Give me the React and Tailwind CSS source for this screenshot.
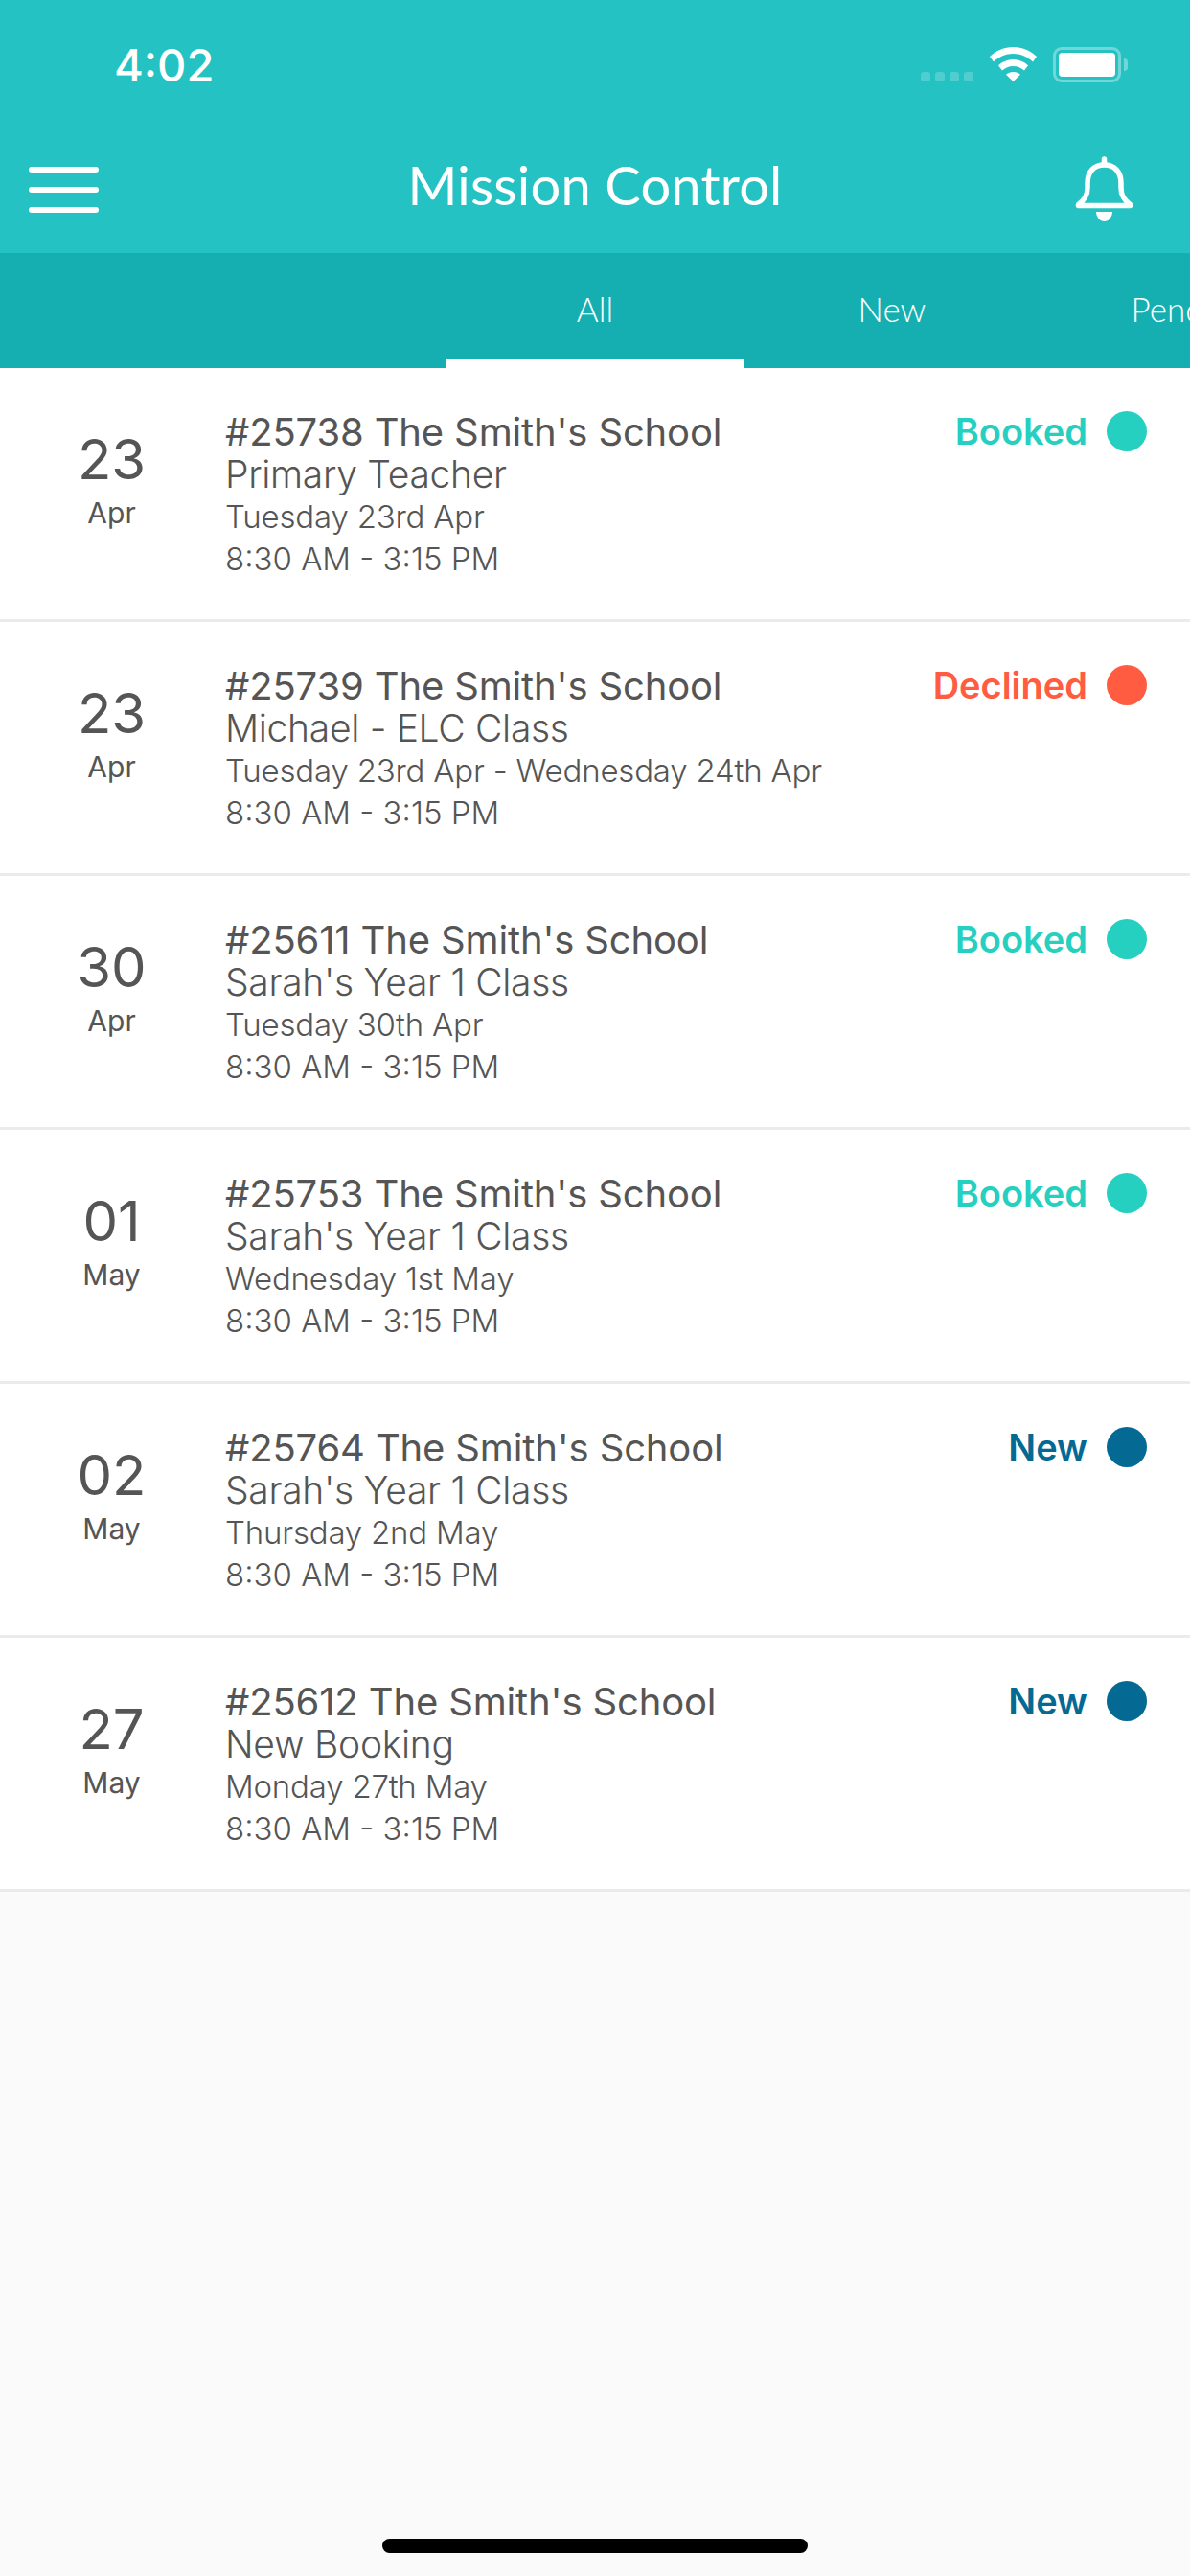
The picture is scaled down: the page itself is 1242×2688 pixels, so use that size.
import React from "react";

const rows = [
  { day: "23", month: "Apr", title: "#25738 The Smith's School", sub: "Primary Teacher", date: "Tuesday 23rd Apr", status: "Booked" },
  { day: "23", month: "Apr", title: "#25739 The Smith's School", sub: "Michael - ELC Class", date: "Tuesday 23rd Apr - Wednesday 24th Apr", status: "Declined" },
  { day: "30", month: "Apr", title: "#25611 The Smith's School", sub: "Sarah's Year 1 Class", date: "Tuesday 30th Apr", status: "Booked" },
  { day: "01", month: "May", title: "#25753 The Smith's School", sub: "Sarah's Year 1 Class", date: "Wednesday 1st May", status: "Booked" },
  { day: "02", month: "May", title: "#25764 The Smith's School", sub: "Sarah's Year 1 Class", date: "Thursday 2nd May", status: "New" },
  { day: "27", month: "May", title: "#25612 The Smith's School", sub: "New Booking", date: "Monday 27th May", status: "New" },
];

const statusText = {
  Booked: "text-[#26d0c0]",
  Declined: "text-[#ff5c42]",
  New: "text-[#046a94]",
};

const statusDot = {
  Booked: "bg-[#26d0c0]",
  Declined: "bg-[#ff5c42]",
  New: "bg-[#046a94]",
};

const BookingRow = ({ row }) => (
  <div className="flex h-[265px] border-b-[3px] border-[#ebebed] bg-white font-['Inter',sans-serif]">
    <div className="flex w-[235px] shrink-0 flex-col items-center pr-[2px] pt-[62px]">
      <span className="text-[58px] leading-[66px] text-[#555555]">{row.day}</span>
      <span className="mt-[3px] text-[30px] leading-[40px] text-[#555555]">{row.month}</span>
    </div>
    <div className="flex-1 pt-[44px] text-[#555555]">
      <div className="text-[40px] leading-[45px] tracking-[-0.15px]">{row.title}</div>
      <div className="mt-[-1px] text-[39px] font-light leading-[45px] tracking-[-0.3px]">{row.sub}</div>
      <div className="text-[33px] font-light leading-[44px] tracking-[-0.2px]">{row.date}</div>
      <div className="text-[33px] font-light leading-[44px]">8:30 AM - 3:15 PM</div>
    </div>
    <div className="flex h-fit items-center gap-[20px] pr-[45px] pt-[45px]">
      <span className={`text-[38px] font-semibold leading-[42px] ${statusText[row.status]}`}>{row.status}</span>
      <span className={`h-[42px] w-[42px] rounded-full ${statusDot[row.status]}`} />
    </div>
  </div>
);

export default function App() {
  return (
    <div className="flex h-[2688px] w-[1242px] flex-col overflow-hidden bg-[#fafafa]">
      {/* status bar and title */}
      <div className="h-[264px] bg-[#25c2c3] text-white">
        <div className="flex h-[130px] items-start pl-[119px] pr-[65px] pt-[40px]">
          <span className="font-['Inter',sans-serif] text-[47px] font-medium leading-[56px]">4:02</span>
          <div className="ml-auto flex items-start pt-[9px]">
            <div className="mt-[26px] flex gap-[5px]">
              <span className="h-[10px] w-[10px] rounded-[3px] bg-white/20" />
              <span className="h-[10px] w-[10px] rounded-[3px] bg-white/20" />
              <span className="h-[10px] w-[10px] rounded-[3px] bg-white/20" />
              <span className="h-[10px] w-[10px] rounded-[3px] bg-white/20" />
            </div>
            <svg className="ml-[17px]" width="49" height="36" viewBox="0 0 49 36" fill="white">
              <path d="M24.5 0C15 0 6.7 3.7 0 10l4 5.5C9.7 10.2 16.6 7 24.5 7s14.8 3.2 20.5 8.5l4-5.5C42.3 3.7 34 0 24.5 0z" />
              <path d="M24.5 13c-6 0-11.3 2.3-15.5 6.2l4 5.3c3-2.7 7-4.5 11.5-4.5s8.5 1.8 11.5 4.5l4-5.3C35.8 15.3 30.5 13 24.5 13z" />
              <path d="M24.5 26c-3 0-5.5 1-7.5 2.8L24.5 36 32 28.8C30 27 27.5 26 24.5 26z" />
            </svg>
            <div className="ml-[17px] flex items-center">
              <div className="h-[37px] w-[71px] rounded-[9px] border-[3px] border-white/35 p-[3px]">
                <div className="h-full w-full rounded-[4px] bg-white" />
              </div>
              <div className="ml-[3px] h-[13px] w-[4px] rounded-r-full bg-white/35" />
            </div>
          </div>
        </div>
        <div className="flex h-[134px] items-start justify-between">
          <div className="w-[120px] pl-[30px] pt-[44px]">
            <div className="flex w-[73px] flex-col gap-[15px]">
              <span className="h-[6px] rounded-full bg-white" />
              <span className="h-[6px] rounded-full bg-white" />
              <span className="h-[6px] rounded-full bg-white" />
            </div>
          </div>
          <span className="mt-[30px] font-['Lato',sans-serif] text-[56px] font-normal leading-[66px] tracking-[0.2px]">Mission Control</span>
          <div className="w-[120px] pt-[33px]">
            <svg width="61" height="68" viewBox="0 0 61 68" fill="none" stroke="white" strokeWidth="5.5" strokeLinejoin="round" strokeLinecap="round">
              <path d="M30.5 9C20 9 13 16 13 28v5c0 8-3 12.5-9.5 17.5v1h54v-1C51 45.5 48 41 48 33v-5C48 16 41 9 30.5 9z" />
              <path d="M30.5 3v5" />
              <path d="M22 58h17c0 5-3.8 10-8.5 10S22 63 22 58z" fill="white" stroke="none" />
            </svg>
          </div>
        </div>
      </div>

      {/* tabs */}
      <div className="flex h-[120px] overflow-hidden bg-[#15afb1] pl-[466px] font-['Lato',sans-serif] text-[35px] font-light leading-[40px] text-white">
        <div className="flex h-full w-[310px] shrink-0 justify-center border-b-[9px] border-white pt-[38px]">All</div>
        <div className="flex h-full w-[310px] shrink-0 justify-center pt-[38px]">New</div>
        <div className="flex h-full w-[310px] shrink-0 justify-center pt-[38px]">Pending</div>
      </div>

      {/* bookings */}
      <div className="flex flex-col">
        {rows.map((row) => (
          <BookingRow key={row.title} row={row} />
        ))}
      </div>

      {/* home indicator */}
      <div className="mt-auto flex justify-center pb-[24px]">
        <span className="h-[15px] w-[444px] rounded-[8px] bg-black" />
      </div>
    </div>
  );
}
